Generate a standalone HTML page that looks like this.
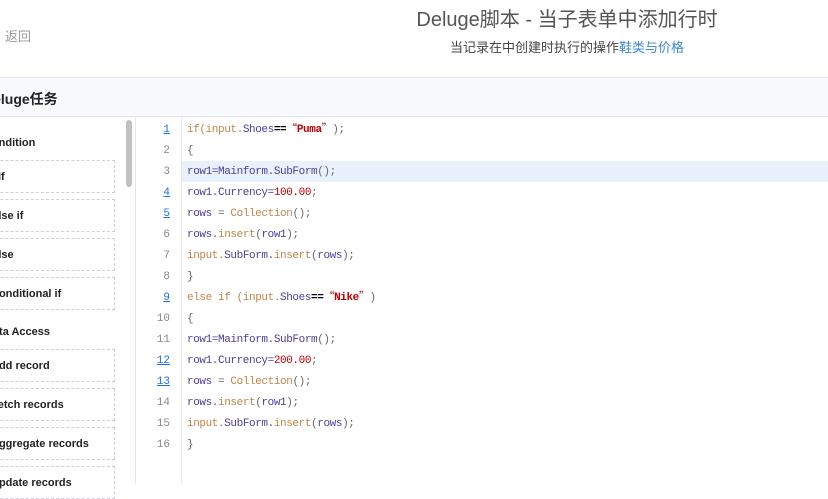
<!DOCTYPE html>
<html><head><meta charset="utf-8"><style>
*{margin:0;padding:0;box-sizing:border-box}
body{width:828px;height:484px;overflow:hidden;background:#fff;font-family:"Liberation Sans","Noto Sans CJK SC",sans-serif;position:relative}
.abs{position:absolute;white-space:nowrap}
.back{left:5px;top:26px;font-size:13px;color:#999}
.title{left:0;width:1134px;text-align:center;top:3px;font-size:20px;color:#555}
.sub{left:0;width:1134px;text-align:center;top:37px;font-size:13px;color:#444}
.sub span{color:#3b86d6}
.bar{left:0;top:77px;width:828px;height:40px;background:#f8f9fc;border-top:1px solid #e8e8ee;border-bottom:1px solid #e3e3ea}
.bar b{position:absolute;left:-17px;top:11px;font-size:14px;color:#222}
.left{left:0;top:117px;width:136px;height:367px;background:#fff;border-right:1px solid #e6e6ec}
.sb{left:126px;top:120px;width:6px;height:67px;background:#c1c1c1;border-radius:3px}
.sec{font-size:11px;font-weight:bold;color:#222}
.item{left:-20px;width:135px;height:33px;border:1px dashed #cfcfd8;font-size:11px;font-weight:bold;color:#222;padding:10px 0 0 10px}
.gut{left:137px;top:117px;width:45px;height:367px;border-right:1px solid #e6e6ec;background:#fff}
.ln{left:137px;width:33px;text-align:right;font-family:"Liberation Mono",monospace;font-size:11px;line-height:14px;color:#888}
.ln.u{color:#1a73e8;text-decoration:underline}
.hl{left:182px;top:161px;width:646px;height:21px;background:#e8f1fc}
.code{left:187px;font-family:"Liberation Mono",monospace;font-size:11px;line-height:14px;height:14px;letter-spacing:-0.4px;color:#4a3f9f}
.k{color:#c0834a}.r{color:#c00000}.p{color:#666}
.q{color:#c00000;font-family:"Noto Sans CJK SC",sans-serif;font-weight:normal;line-height:1;display:inline-block;vertical-align:top;height:14px}
</style></head><body>
<div class="abs back">返回</div>
<div class="abs title">Deluge脚本 - 当子表单中添加行时</div>
<div class="abs sub">当记录在中创建时执行的操作<span>鞋类与价格</span></div>
<div class="abs bar"><b>Deluge任务</b></div>
<div class="abs left"></div>
<div class="abs sb"></div>
<div class="abs sec" style="left:-16px;top:137px">Condition</div>
<div class="abs item" style="top:160px;padding-left:17px">If</div>
<div class="abs item" style="top:199px">Else if</div>
<div class="abs item" style="top:238px">Else</div>
<div class="abs item" style="top:277px">Conditional if</div>
<div class="abs sec" style="left:-15px;top:326px">Data Access</div>
<div class="abs item" style="top:349px">Add record</div>
<div class="abs item" style="top:388px">Fetch records</div>
<div class="abs item" style="top:427px">Aggregate records</div>
<div class="abs item" style="top:466px">Update records</div>
<div class="abs gut"></div>
<div class="abs hl"></div>
<div class="abs ln u" style="top:123px">1</div>
<div class="abs ln" style="top:144px">2</div>
<div class="abs ln" style="top:165px">3</div>
<div class="abs ln u" style="top:186px">4</div>
<div class="abs ln u" style="top:207px">5</div>
<div class="abs ln" style="top:228px">6</div>
<div class="abs ln" style="top:249px">7</div>
<div class="abs ln" style="top:270px">8</div>
<div class="abs ln u" style="top:291px">9</div>
<div class="abs ln" style="top:312px">10</div>
<div class="abs ln" style="top:333px">11</div>
<div class="abs ln u" style="top:354px">12</div>
<div class="abs ln u" style="top:375px">13</div>
<div class="abs ln" style="top:396px">14</div>
<div class="abs ln" style="top:417px">15</div>
<div class="abs ln" style="top:438px">16</div>
<div class="abs code" style="top:123px"><span class="k">if(input.</span>Shoes<b style="color:#000">==</b><span class="q">“</span><b class="r">Puma</b><span class="q">”</span><span class="p">);</span></div>
<div class="abs code p" style="top:144px">{</div>
<div class="abs code" style="top:165px">row1=Mainform.SubForm<span class="p">();</span></div>
<div class="abs code" style="top:186px">row1.Currency=<span class="r">100.00</span><span class="p">;</span></div>
<div class="abs code" style="top:207px">rows <span class="p">=</span> <span class="k">Collection</span><span class="p">();</span></div>
<div class="abs code" style="top:228px">rows.<span class="k">insert</span><span class="p">(</span>row1<span class="p">);</span></div>
<div class="abs code" style="top:249px"><span class="k">input.</span>SubForm.<span class="k">insert</span><span class="p">(</span>rows<span class="p">);</span></div>
<div class="abs code p" style="top:270px">}</div>
<div class="abs code" style="top:291px"><span class="k">else if (input.</span>Shoes<b style="color:#000">==</b><span class="q">“</span><b class="r">Nike</b><span class="q">”</span><span class="p">)</span></div>
<div class="abs code p" style="top:312px">{</div>
<div class="abs code" style="top:333px">row1=Mainform.SubForm<span class="p">();</span></div>
<div class="abs code" style="top:354px">row1.Currency=<span class="r">200.00</span><span class="p">;</span></div>
<div class="abs code" style="top:375px">rows <span class="p">=</span> <span class="k">Collection</span><span class="p">();</span></div>
<div class="abs code" style="top:396px">rows.<span class="k">insert</span><span class="p">(</span>row1<span class="p">);</span></div>
<div class="abs code" style="top:417px"><span class="k">input.</span>SubForm.<span class="k">insert</span><span class="p">(</span>rows<span class="p">);</span></div>
<div class="abs code p" style="top:438px">}</div>
</body></html>
